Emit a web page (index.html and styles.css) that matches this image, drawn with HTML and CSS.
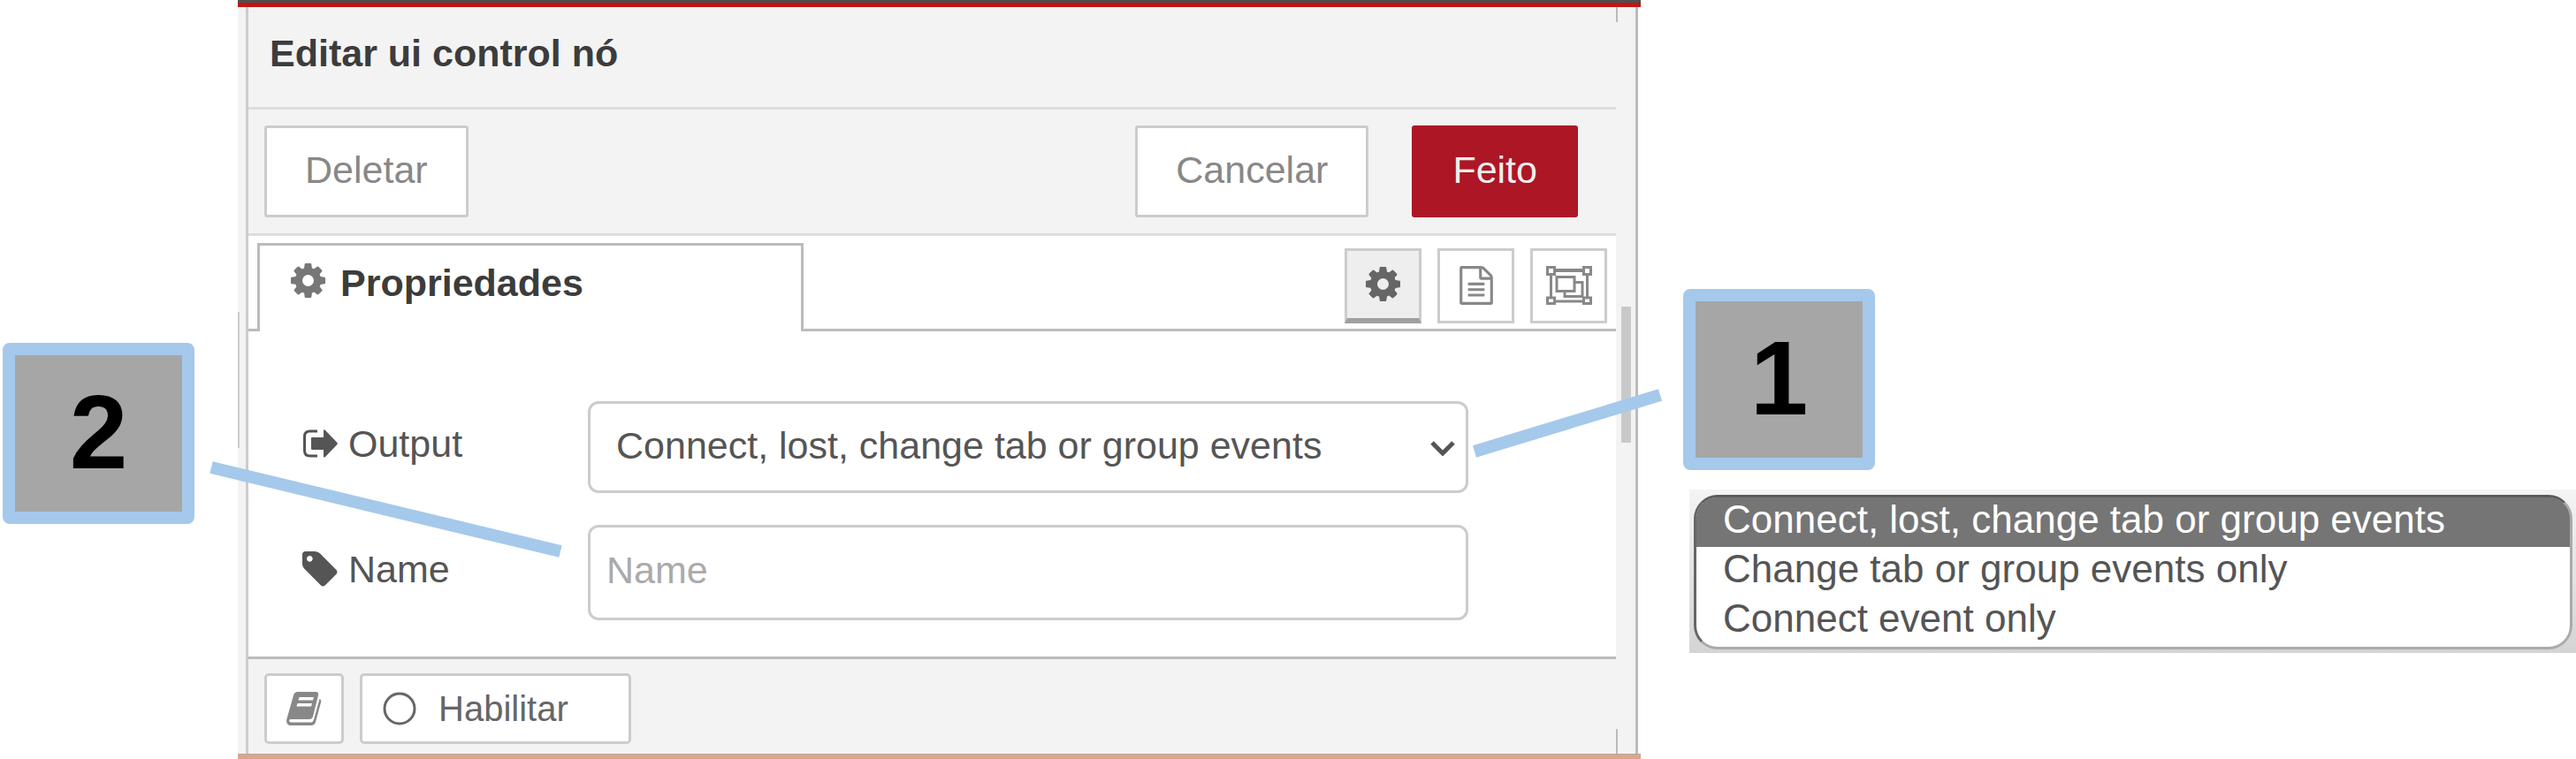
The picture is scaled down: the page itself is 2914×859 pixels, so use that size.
FILE: index.html
```html
<!DOCTYPE html>
<html lang="pt">
<head>
<meta charset="utf-8">
<title>Editar ui control nó</title>
<link rel="stylesheet" href="styles.css">
</head>
<body>
<main class="figure">
  <div class="side side-left"><div class="badge">2</div></div>

  <section class="dialog">
    <div class="dialog-body">
      <div class="gutter"></div>
      <div class="editor">
        <h1 class="title">Editar ui control nó</h1>
        <div class="toolbar">
          <button class="btn" type="button">Deletar</button>
          <span class="spacer"></span>
          <button class="btn btn-cancel" type="button">Cancelar</button>
          <button class="btn btn-primary" type="button">Feito</button>
        </div>
        <div class="tabs">
          <div class="tab">
            <svg class="icon-gear" viewBox="128 128 1536 1536"><path d="M1152 896q0-106-75-181t-181-75-181 75-75 181 75 181 181 75 181-75 75-181zm512-109v222q0 12-8 23t-20 13l-185 28q-19 54-39 91 35 50 107 138 10 12 10 25t-9 23q-27 37-99 108t-94 71q-12 0-26-9l-138-108q-44 23-91 38-16 136-29 186-7 28-36 28h-222q-14 0-24.5-8.5t-11.5-21.5l-28-184q-49-16-90-37l-141 107q-10 9-25 9-14 0-25-11-126-114-165-168-7-10-7-23 0-12 8-23 15-21 51-66.5t54-70.5q-27-50-41-99l-183-27q-13-2-21-12.5t-8-23.5v-222q0-12 8-23t19-13l186-28q14-46 39-92-40-57-107-138-10-12-10-24 0-10 9-23 26-36 98.5-107.5t94.5-71.5q13 0 26 10l138 107q44-23 91-38 16-136 29-186 7-28 36-28h222q14 0 24.5 8.5t11.5 21.5l28 184q49 16 90 37l142-107q9-9 24-9 13 0 25 10 129 119 165 170 7 8 7 22 0 12-8 23-15 21-51 66.5t-54 70.5q26 50 41 98l183 28q13 2 21 12.5t8 23.5z"/></svg>
            <span>Propriedades</span>
          </div>
          <div class="tab-tools">
            <button class="tool tool-active" type="button" aria-label="Propriedades">
              <svg class="icon-gear" viewBox="128 128 1536 1536"><path d="M1152 896q0-106-75-181t-181-75-181 75-75 181 75 181 181 75 181-75 75-181zm512-109v222q0 12-8 23t-20 13l-185 28q-19 54-39 91 35 50 107 138 10 12 10 25t-9 23q-27 37-99 108t-94 71q-12 0-26-9l-138-108q-44 23-91 38-16 136-29 186-7 28-36 28h-222q-14 0-24.5-8.5t-11.5-21.5l-28-184q-49-16-90-37l-141 107q-10 9-25 9-14 0-25-11-126-114-165-168-7-10-7-23 0-12 8-23 15-21 51-66.5t54-70.5q-27-50-41-99l-183-27q-13-2-21-12.5t-8-23.5v-222q0-12 8-23t19-13l186-28q14-46 39-92-40-57-107-138-10-12-10-24 0-10 9-23 26-36 98.5-107.5t94.5-71.5q13 0 26 10l138 107q44-23 91-38 16-136 29-186 7-28 36-28h222q14 0 24.5 8.5t11.5 21.5l28 184q49 16 90 37l142-107q9-9 24-9 13 0 25 10 129 119 165 170 7 8 7 22 0 12-8 23-15 21-51 66.5t-54 70.5q26 50 41 98l183 28q13 2 21 12.5t8 23.5z"/></svg>
            </button>
            <button class="tool" type="button" aria-label="Descrição">
              <svg class="icon-doc" viewBox="128 0 1536 1792"><path d="M1596 380q28 28 48 76t20 88v1152q0 40-28 68t-68 28h-1344q-40 0-68-28t-28-68v-1600q0-40 28-68t68-28h896q40 0 88 20t76 48zm-444-244v376h376q-10-29-22-41l-313-313q-12-12-41-22zm384 1528v-1024h-416q-40 0-68-28t-28-68v-416h-768v1536h1280zm-1024-864q0-14 9-23t23-9h704q14 0 23 9t9 23v64q0 14-9 23t-23 9h-704q-14 0-23-9t-9-23v-64zm736 224q14 0 23 9t9 23v64q0 14-9 23t-23 9h-704q-14 0-23-9t-9-23v-64q0-14 9-23t23-9h704zm0 256q14 0 23 9t9 23v64q0 14-9 23t-23 9h-704q-14 0-23-9t-9-23v-64q0-14 9-23t23-9h704z"/></svg>
            </button>
            <button class="tool" type="button" aria-label="Aparência">
              <svg class="icon-group" viewBox="0 0 52 44">
                <path d="M10 5H42" stroke-width="4"/>
                <path d="M10 40H42M5.500 10V36M46.500 10V36" stroke-width="3"/>
                <path d="M1.500 1.500h8v8h-8zM42.500 1.500h8v8h-8zM1.500 36h8v6.500h-8zM42.500 36h8v6.500h-8z" stroke-width="3"/>
                <path d="M12 12.500h20v16H12z" stroke-width="3"/>
                <path d="M32 18.500h9v16H21v-6" stroke-width="3"/>
              </svg>
            </button>
          </div>
        </div>
        <form class="form">
          <label class="label" for="events">
            <svg class="icon-label" viewBox="0 0 40 40"><path d="M17 6H8.500Q2.500 6 2.500 12v16q0 6 6 6H17" fill="none" stroke="#555" stroke-width="3"/><path d="M11 13h13V5.500q0-2 2-.5l13 13.500q1.500 1.500 0 3L26 35q-2 1.500-2-.5V27H11q-1 0-1-1V14q0-1 1-1z"/></svg>
            <span>Output</span>
          </label>
          <div class="select-box">
            <select class="field field-select" id="events">
              <option>Connect, lost, change tab or group events</option>
              <option>Change tab or group events only</option>
              <option>Connect event only</option>
            </select>
            <svg class="chevron" viewBox="0 0 28 18"><path d="M2 3l12 12L26 3" fill="none" stroke="#555" stroke-width="5"/></svg>
          </div>
          <label class="label" for="name">
            <svg class="icon-label" viewBox="128 128 1536 1536"><path d="M576 448q0-53-37.500-90.500t-90.500-37.500-90.500 37.500-37.500 90.500 37.500 90.500 90.500 37.500 90.500-37.500 37.500-90.500zm1067 576q0 53-37 90l-491 492q-39 37-91 37-53 0-90-37l-715-716q-38-37-64.500-101t-26.500-117v-416q0-52 38-90t90-38h416q53 0 117 26.500t102 64.500l715 714q37 39 37 91z"/></svg>
            <span>Name</span>
          </label>
          <input class="field field-text" id="name" type="text" placeholder="Name">
        </form>
        <div class="footer">
          <button class="foot-btn foot-book" type="button" aria-label="Ajuda">
            <svg class="icon-book" viewBox="0 0 40 38"><path fill-rule="evenodd" d="M13 0H33q4 0 3 4L30 28q-1 3-4 3H5q-2 0-2 1.500T5 34.500H28q2 0 3-3L37.500 8Q40 9 39 12L33 34q-1 4-5 4H5Q0 38 0 32L8 4q1-4 5-4zM14.500 6l-1 3.500H30L31 6zM12.500 13l-1 3.500H28L29 13z"/></svg>
          </button>
          <button class="foot-btn foot-enable" type="button">
            <svg class="icon-circle" viewBox="0 0 38 38"><circle cx="19" cy="19" r="17" fill="none" stroke="#666" stroke-width="3"/></svg>
            Habilitar
          </button>
        </div>
      </div>
      <div class="track"><span class="thumb"></span></div>
    </div>
  </section>

  <div class="side side-right">
    <div class="badge">1</div>
    <div class="popup">
      <select class="list" size="3" aria-label="Output">
        <option selected>Connect, lost, change tab or group events</option>
        <option>Change tab or group events only</option>
        <option>Connect event only</option>
      </select>
    </div>
  </div>

  <svg class="callouts" viewBox="0 0 2914 859" preserveAspectRatio="none">
    <path d="M239 529L634 624M1668 511L1878 447"/>
  </svg>
</main>
</body>
</html>
```

FILE: styles.css
```css
* {
  box-sizing: border-box;
}

body {
  margin: 0;
  background: #fff;
  color: #555;
  font-family: "Liberation Sans", Arial, sans-serif;
  font-size: 43px;
}

button,
input,
select {
  margin: 0;
  font: inherit;
  color: inherit;
}

svg {
  display: block;
  flex: none;
  fill: currentColor;
}

.figure {
  position: relative;
  display: grid;
  grid-template-columns: 269fr 1587fr 1058fr;
}

/* numbered badges */
.side-left {
  padding: 388px 0 0 3px;
}

.side-right {
  padding-top: 327px;
}

.side-right .badge {
  margin-left: 48px;
}

.badge {
  display: flex;
  align-items: center;
  justify-content: center;
  width: 217px;
  height: 205px;
  padding-bottom: 4px;
  border: 14px solid #a5c9eb;
  border-radius: 8px;
  background: #a6a6a6;
  color: #000;
  font-size: 118px;
  font-weight: bold;
  line-height: 1;
}

.callouts {
  position: absolute;
  inset: 0;
  width: 100%;
  height: 100%;
  fill: none;
  stroke: #a5c9eb;
  stroke-width: 14px;
  pointer-events: none;
}

/* dialog frame */
.dialog {
  border-top: 3px solid #4c5050;
  border-bottom: 5px solid #dfa585;
  background: #f3f3f3;
}

.dialog-body {
  display: flex;
  border-top: 5px solid #c41414;
  border-bottom: 1px solid #aaa;
}

.gutter {
  width: 9px;
}

.gutter::before {
  content: "";
  display: block;
  width: 2px;
  height: 154px;
  margin-top: 345px;
  background: #ccc;
}

.editor {
  flex: 1;
  min-width: 0;
  border-left: 3px solid #ccc;
}

.track {
  display: flex;
  flex-direction: column;
  width: 28px;
  border-right: 3px solid #fdfdfd;
  box-shadow: inset -3px 0 #bbb;
}

.track::before,
.track::after {
  content: "";
  width: 2px;
  height: 17px;
  background: #bbb;
}

.track::after {
  height: 28px;
  margin-top: auto;
}

.thumb {
  width: 11px;
  height: 154px;
  margin: 322px 0 0 6px;
  background: #c9c9c9;
}

/* header */
.title {
  margin: 0;
  padding: 27px 24px 36px;
  border-bottom: 3px solid #ddd;
  color: #3c3c3c;
  font-size: 43px;
  line-height: 50px;
}

.toolbar {
  display: flex;
  align-items: center;
  padding: 18px 43px 18px 18px;
  border-bottom: 3px solid #ddd;
}

.spacer {
  flex: 1;
}

.btn {
  height: 104px;
  padding: 0 43px 4px;
  border: 3px solid #ccc;
  border-radius: 3px;
  background: #fff;
  color: #888;
}

.btn-cancel {
  margin-right: 49px;
}

.btn-primary {
  border-color: #ad1625;
  background: #ad1625;
  color: #eee;
}

/* tabs */
.tabs {
  display: flex;
  justify-content: space-between;
  padding: 8px 10px 0;
  border-bottom: 3px solid #bbb;
  background: #fff;
}

.tab {
  display: flex;
  gap: 17px;
  width: 618px;
  height: 100px;
  margin-bottom: -3px;
  padding: 20px 35px;
  border: 3px solid #bbb;
  border-bottom: 0;
  background: #fff;
  color: #3c3c3c;
  font-weight: bold;
  line-height: 44px;
}

.tab .icon-gear {
  color: #777;
}

.icon-gear {
  width: 39px;
  height: 39px;
}

.tab-tools {
  display: flex;
  gap: 18px;
  padding-top: 6px;
}

.tool {
  display: flex;
  align-items: center;
  justify-content: center;
  width: 87px;
  height: 85px;
  padding: 0 0 2px;
  border: 3px solid #ccc;
  background: #fff;
  color: #888;
}

.tool-active {
  border-bottom: 6px solid #a0a0a0;
  background: #eee;
  color: #666;
}

.icon-doc {
  width: 38px;
  height: 44px;
}

.icon-group {
  width: 52px;
  height: 44px;
  fill: none;
  stroke: #888;
}

/* form */
.form {
  display: grid;
  grid-template-columns: 323px 1fr;
  row-gap: 36px;
  padding: 79px 167px 41px 61px;
  background: #fff;
}

.label {
  display: flex;
  align-items: center;
  gap: 12px;
  padding-bottom: 8px;
}

.icon-label {
  width: 40px;
  height: 40px;
}

.select-box {
  position: relative;
}

.field {
  display: block;
  width: 100%;
  border: 3px solid #ccc;
  border-radius: 12px;
  outline: 0;
  background: #fff;
}

.field-select {
  height: 104px;
  padding: 0 80px 4px 29px;
  appearance: none;
}

.field-text {
  height: 108px;
  padding: 0 18px 6px;
}

.field-text::placeholder {
  color: #aaa;
}

.chevron {
  position: absolute;
  top: 44px;
  right: 15px;
  width: 28px;
  height: 18px;
  pointer-events: none;
}

/* footer */
.footer {
  display: flex;
  gap: 18px;
  padding: 16px 18px 11px;
  border-top: 3px solid #bbb;
}

.foot-btn {
  display: flex;
  align-items: center;
  height: 80px;
  border: 3px solid #ccc;
  border-radius: 5px;
  background: #fff;
  color: #666;
  font-size: 40px;
}

.foot-book {
  justify-content: center;
  width: 90px;
  color: #888;
}

.foot-enable {
  gap: 25px;
  width: 307px;
  padding: 0 23px;
}

.icon-book {
  width: 40px;
  height: 38px;
}

.icon-circle {
  width: 38px;
  height: 38px;
}

/* option list */
.popup {
  margin: 22px 0 0 55px;
  padding: 6px 4px 4px 5px;
  background: linear-gradient(#f4f4f4, #d4d4d4);
}

.list {
  display: block;
  width: 100%;
  height: 175px;
  padding: 0;
  border: 3px solid #aaa;
  border-top-color: #5c5c5c;
  border-left-color: #666;
  border-radius: 27px;
  outline: 0;
  overflow: hidden;
  background: #fff;
  font-size: 44px;
}

.list option {
  min-height: 0;
  padding: 0 0 6px 30px;
  line-height: 49px;
}

.list option:checked {
  background: #757575 linear-gradient(#757575, #757575);
  color: #fff;
}
```
